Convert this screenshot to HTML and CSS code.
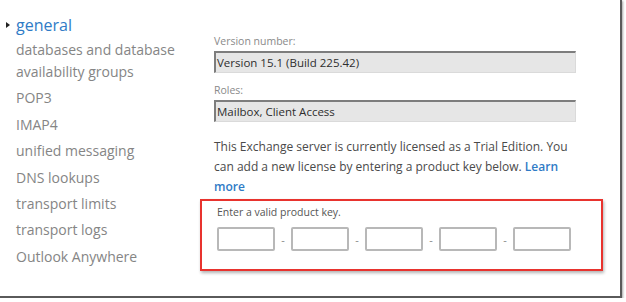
FILE: index.html
```html
<!DOCTYPE html>
<html lang="en">
<head>
    <meta charset="UTF-8">
    <title>Server properties - general</title>
    <link rel="stylesheet" href="styles.css">
</head>
<body>

    <div class="frame">
        <nav class="side-nav">
            <ul>
                <li class="active">general</li>
                <li>databases and database availability groups</li>
                <li>POP3</li>
                <li>IMAP4</li>
                <li>unified messaging</li>
                <li>DNS lookups</li>
                <li>transport limits</li>
                <li>transport logs</li>
                <li>Outlook Anywhere</li>
            </ul>
        </nav>

        <main class="content">
            <div class="field">
                <div class="field-label">Version number:</div>
                <div class="readonly">Version 15.1 (Build 225.42)</div>
            </div>

            <div class="field">
                <div class="field-label">Roles:</div>
                <div class="readonly">Mailbox, Client Access</div>
            </div>

            <p class="license-note">
                This Exchange server is currently licensed as a Trial Edition. You can add a new license by entering a product key below. <a href="#">Learn more</a>
            </p>

            <div class="key-panel">
                <div class="key-label">Enter a valid product key.</div>
                <div class="key-row">
                    <input type="text" class="key-input">
                    <span class="key-dash">-</span>
                    <input type="text" class="key-input">
                    <span class="key-dash">-</span>
                    <input type="text" class="key-input">
                    <span class="key-dash">-</span>
                    <input type="text" class="key-input">
                    <span class="key-dash">-</span>
                    <input type="text" class="key-input">
                </div>
            </div>
        </main>
    </div>

</body>
</html>
```

FILE: styles.css
```css
:root {
    --c-nav-text: #858585;
    --c-link: #2f7bc6;
    --c-label: #8a8a8a;
    --c-text: #4a4a4a;
    --c-field-bg: #e6e6e6;
    --c-field-edge: #7d7d7d;
    --c-key-border: #b8b8b8;
    --c-highlight: #e8332e;
}
body {
    margin: 0;
    background: #fff;
    font-family: "Open Sans", "Noto Sans", Arial, sans-serif;
}
.frame {
    display: flex;
    width: 620px;
    height: 296px;
    border-right: 2px solid #5a5a5a;
    border-bottom: 2px solid #5a5a5a;
    box-shadow: 1px 1px 2px rgba(0, 0, 0, 0.35);
    background: #fff;
}
.side-nav {
    width: 198px;
    padding-left: 16px;
    padding-top: 14px;
}
.side-nav ul {
    list-style: none;
    margin: 0;
    padding: 0;
}
.side-nav li {
    font-size: 14px;
    line-height: 22px;
    color: var(--c-nav-text);
    margin-bottom: 4.4px;
    width: 180px;
}
.side-nav li.active {
    position: relative;
    font-size: 16px;
    color: var(--c-link);
    margin-bottom: 3px;
}
.side-nav li.active::before {
    content: "";
    position: absolute;
    left: -10px;
    top: 8px;
    border-left: 4px solid #222;
    border-top: 3px solid transparent;
    border-bottom: 3px solid transparent;
}
.content {
    padding-top: 34px;
    width: 390px;
}
.field {
    margin-bottom: 10px;
}
.field-label {
    font-size: 10.5px;
    line-height: 14px;
    color: var(--c-label);
    margin-bottom: 3px;
}
.readonly {
    width: 358px;
    height: 19px;
    background: var(--c-field-bg);
    border-top: 2px solid var(--c-field-edge);
    border-left: 2px solid var(--c-field-edge);
    border-right: 1px solid #dadada;
    border-bottom: 1px solid #dadada;
    font-size: 11.5px;
    line-height: 19px;
    padding-left: 1px;
    color: #2e2e2e;
}
.license-note {
    margin: 15px 0 0;
    width: 362px;
    font-size: 12px;
    line-height: 20px;
    color: var(--c-text);
}
.license-note a {
    color: var(--c-link);
    font-weight: 600;
    text-decoration: none;
}
.key-panel {
    margin: 2px 0 0 -14px;
    width: 384px;
    height: 68px;
    border: 2px solid var(--c-highlight);
    box-shadow: 1px 2px 3px rgba(0, 0, 0, 0.3);
    padding: 0 0 0 15px;
}
.key-label {
    font-size: 10.5px;
    line-height: 14px;
    color: #555;
    margin-top: 4px;
}
.key-row {
    display: flex;
    align-items: center;
    margin-top: 8px;
}
.key-input {
    width: 54px;
    height: 20px;
    margin: 0;
    padding: 0;
    border: 2px solid var(--c-key-border);
    border-radius: 2px;
    background: #fff;
}
.key-dash {
    width: 16px;
    text-align: center;
    font-size: 11px;
    color: #888;
}
```
